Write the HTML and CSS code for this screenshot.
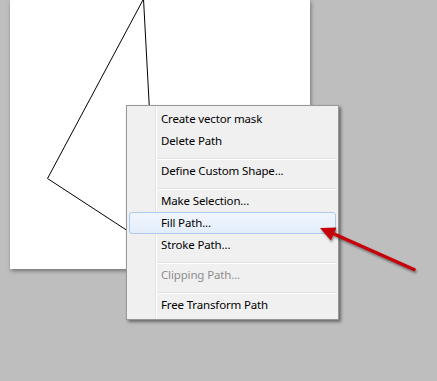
FILE: index.html
```html
<!DOCTYPE html>
<html>
<head>
  <meta charset="UTF-8">
  <title>Path context menu</title>
  <link rel="stylesheet" href="styles.css">
</head>
<body>
  <div class="workspace">
    <div class="canvas">
      <svg class="shape" width="300" height="269" viewBox="10 0 300 269">
        <polygon points="143.5,-1 47.5,178.5 157,250" fill="none" stroke="#000" stroke-width="1"/>
      </svg>
    </div>

    <ul class="context-menu">
      <li class="item">Create vector mask</li>
      <li class="item">Delete Path</li>
      <li class="sep"></li>
      <li class="item">Define Custom Shape...</li>
      <li class="sep"></li>
      <li class="item">Make Selection...</li>
      <li class="item hover">Fill Path...</li>
      <li class="item">Stroke Path...</li>
      <li class="sep"></li>
      <li class="item disabled">Clipping Path...</li>
      <li class="sep"></li>
      <li class="item">Free Transform Path</li>
    </ul>

    <!-- annotation arrow pointing at the hovered item -->
    <svg class="arrow" width="437" height="381" viewBox="0 0 437 381">
      <line x1="414" y1="269.5" x2="332" y2="233" stroke="#c8000a" stroke-width="3.5" stroke-linecap="round"/>
      <polygon points="320,228 336.5,227.6 330.9,240.4" fill="#c8000a"/>
    </svg>
  </div>
</body>
</html>
```

FILE: styles.css
```css
html, body { margin: 0; height: 100%; }
body { background: #bebebe; font-family: "Noto Sans", "Open Sans", sans-serif; font-size: 11.5px; overflow: hidden; }
.workspace { position: relative; width: 437px; height: 381px; padding-left: 10px; box-sizing: border-box; }
.canvas { width: 300px; height: 269px; background: #fff; box-shadow: 1px 2px 4px rgba(0,0,0,0.4); }
.shape { display: block; }

.context-menu { position: absolute; left: 126px; top: 105px; width: 211px; margin: 0; padding: 2px 0 3px; list-style: none;
  border: 1px solid #979797; box-shadow: 2px 2px 3px rgba(0,0,0,0.45);
  background: linear-gradient(to right, transparent 28px, #e2e3e3 28px, #e2e3e3 29px, #fff 29px, #fff 30px, transparent 30px), #f0f0f0; }
.item { height: 20px; line-height: 20px; margin: 0 2px; padding-left: 31px; border: 1px solid transparent; border-radius: 3px; color: #000; white-space: nowrap; letter-spacing: -0.15px; }
.item.hover { border-color: #aacbee; background: linear-gradient(#f1f6fd, #e3edfa); }
.item.disabled { color: #8d8d8d; }
.sep { height: 0; margin: 6px 2px 0 30px; border-top: 1px solid #e0e0e0; border-bottom: 1px solid #fff; }

.arrow { position: absolute; left: 0; top: 0; pointer-events: none; filter: drop-shadow(1px 2px 1px rgba(0,0,0,0.4)); }
```
